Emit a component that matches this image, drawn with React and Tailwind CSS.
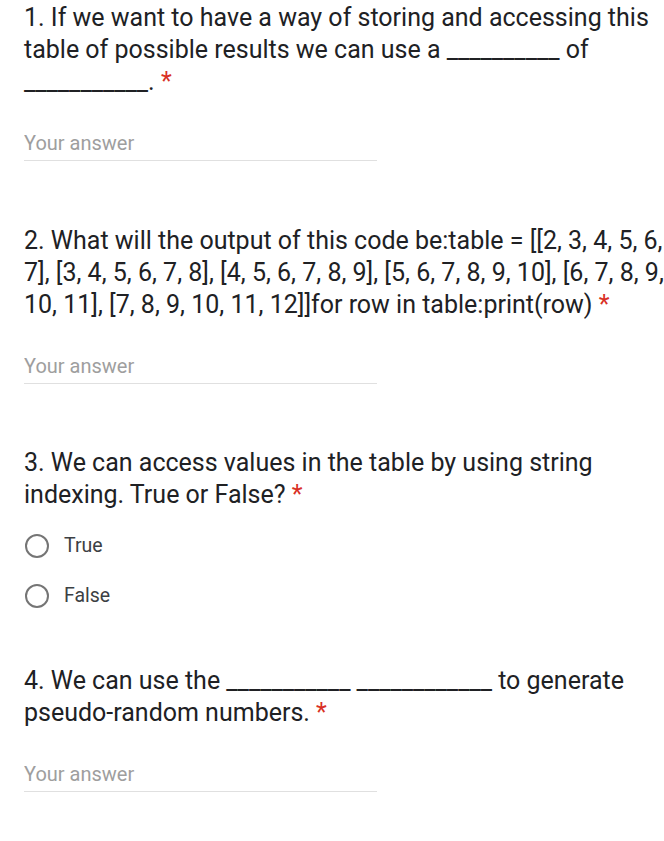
import { useState } from "react";

const Star = () => <span className="text-[#d93025]">*</span>;

function Question({ children }) {
  return (
    <div className="text-[25px] leading-[32px] text-[#202124]">
      {children} <Star />
    </div>
  );
}

function ShortAnswer() {
  const [value, setValue] = useState("");
  return (
    <div className="mt-[33px] w-[353px] border-b border-[#e0e0e0] pb-[5px]">
      <input
        type="text"
        value={value}
        onChange={(e) => setValue(e.target.value)}
        placeholder="Your answer"
        className="block w-full h-6 text-[20px] leading-6 text-[#202124] placeholder:text-[#9e9e9e] outline-none bg-transparent"
      />
    </div>
  );
}

function Radio({ label, checked, onClick }) {
  return (
    <button
      type="button"
      onClick={onClick}
      className="flex items-center h-[50px] w-full text-left"
    >
      <span className="ml-px w-6 h-6 rounded-full border-[2.5px] border-[#757575] flex items-center justify-center">
        {checked && <span className="w-3 h-3 rounded-full bg-[#673ab7]" />}
      </span>
      <span className="ml-[15px] text-[19.5px] text-[#3c4043]">{label}</span>
    </button>
  );
}

export default function App() {
  const [choice, setChoice] = useState(null);

  return (
    <div className="bg-white min-h-screen pl-6 pt-[2px] font-['Roboto',sans-serif]">
      <div>
        <Question>
          1. If we want to have a way of storing and accessing this table of
          possible results we can use a __________ of ___________.
        </Question>
        <ShortAnswer />
      </div>

      <div className="mt-16">
        <Question>
          2. What will the output of this code be:table = [[2, 3, 4, 5, 6, 7],
          [3, 4, 5, 6, 7, 8], [4, 5, 6, 7, 8, 9], [5, 6, 7, 8, 9, 10], [6, 7,
          8, 9, 10, 11], [7, 8, 9, 10, 11, 12]]for row in table:print(row)
        </Question>
        <ShortAnswer />
      </div>

      <div className="mt-[63px]">
        <Question>
          3. We can access values in the table by using string indexing. True
          or False?
        </Question>
        <div className="mt-[10px]">
          <Radio label="True" checked={choice === "True"} onClick={() => setChoice("True")} />
          <Radio label="False" checked={choice === "False"} onClick={() => setChoice("False")} />
        </div>
      </div>

      <div className="mt-[44px] pb-12">
        <Question>
          4. We can use the ___________ ____________ to generate pseudo-random
          numbers.
        </Question>
        <ShortAnswer />
      </div>
    </div>
  );
}
